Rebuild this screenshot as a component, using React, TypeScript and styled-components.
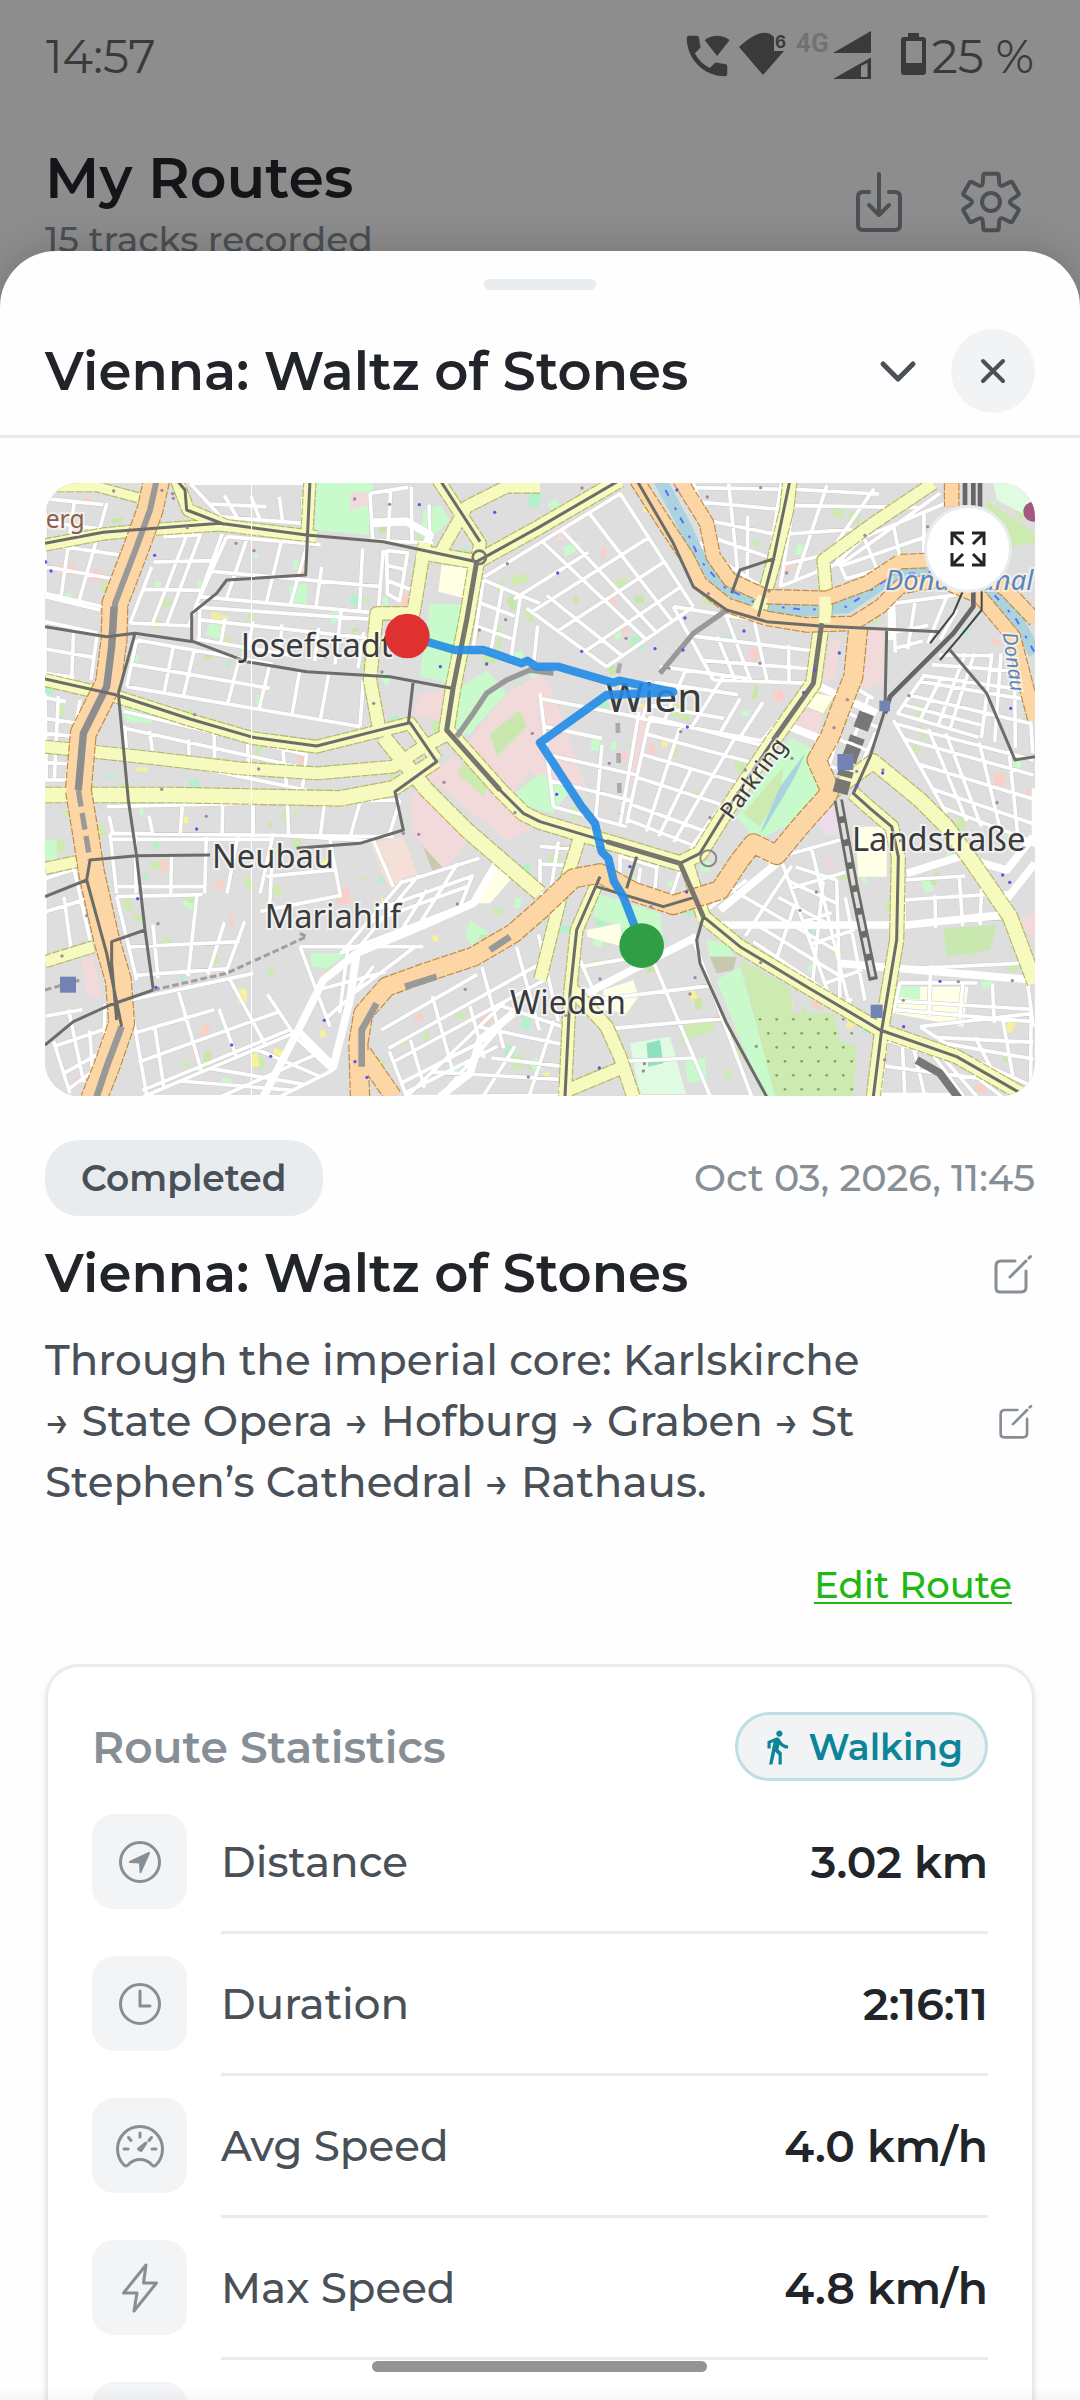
import React from "react";
import styled, { createGlobalStyle } from "styled-components";
import { MdDirectionsWalk, MdWifiCalling } from "react-icons/md";

const GlobalStyle = createGlobalStyle`
  *, *::before, *::after { box-sizing: border-box; }
  body {
    margin: 0;
    background: #8d8d8d;
    font-family: Montserrat, Inter, "Noto Sans", sans-serif;
    color: #212529;
  }
  h1, h2, h3, p, dl, dt, dd { margin: 0; }
  button { font: inherit; color: inherit; border: 0; padding: 0; background: none; cursor: pointer; }
`;

/* ---------- page behind the sheet ---------- */

const Screen = styled.div`
  height: 100vh;
  display: flex;
  flex-direction: column;
  overflow: hidden;
`;

const StatusBar = styled.div`
  flex: none;
  height: 112px;
  padding: 0 46px;
  display: flex;
  align-items: center;
  justify-content: space-between;
  color: #3a3a3a;
  font-size: 46px;
`;

const StatusIcons = styled.div`
  display: flex;
  align-items: center;
  gap: 5px;
`;

const PageHeader = styled.header`
  flex: none;
  height: 139px;
  padding: 30px 55px 0 45px;
  display: flex;
  align-items: flex-start;
  justify-content: space-between;
`;

const PageTitle = styled.h1`
  font-size: 57px;
  line-height: 72px;
  font-weight: 600;
  color: #131519;
`;

const PageSubtitle = styled.p`
  font-size: 36px;
  line-height: 50px;
  font-weight: 500;
  color: #4a5055;
`;

const PageActions = styled.div`
  display: flex;
  gap: 44px;
  padding-top: 26px;
  color: #4a5055;
`;

const ToolButton = styled.button`
  width: 68px;
  height: 68px;
  display: grid;
  place-items: center;
`;

/* ---------- sheet ---------- */

const Sheet = styled.main`
  flex: 1;
  min-height: 0;
  display: flex;
  flex-direction: column;
  position: relative;
  overflow: hidden;
  background: #fefefe;
  border-radius: 56px 56px 0 0;
  box-shadow: 0 -4px 36px rgba(0, 0, 0, 0.16);
`;

const Handle = styled.div`
  flex: none;
  align-self: center;
  width: 112px;
  height: 11px;
  margin-top: 28px;
  border-radius: 6px;
  background: #e9ecef;
`;

const SheetHeader = styled.header`
  flex: none;
  display: flex;
  align-items: center;
  gap: 12px;
  padding: 39px 45px 22px;
  border-bottom: 3px solid #e9ecef;
`;

const Title = styled.h2`
  flex: 1;
  font-size: 53px;
  line-height: 67px;
  font-weight: 600;
`;

const RoundButton = styled.button<{ $filled?: boolean }>`
  width: 84px;
  height: 84px;
  border-radius: 50%;
  display: grid;
  place-items: center;
  color: #495057;
  background: ${(p) => (p.$filled ? "#f1f3f5" : "transparent")};
`;

const Body = styled.div`
  flex: none;
  padding: 45px 45px 0;
`;

const MapFrame = styled.div`
  position: relative;
  aspect-ratio: 990 / 613;
  border-radius: 34px;
  overflow: hidden;
  background: #dedede;

  > svg { display: block; width: 100%; height: 100%; }
`;

const ExpandButton = styled.button`
  position: absolute;
  top: 22px;
  right: 23px;
  width: 88px;
  height: 88px;
  border: 3px solid #e9ecef;
  border-radius: 50%;
  background: #fff;
  color: #212529;
  display: grid;
  place-items: center;
`;

const MetaRow = styled.div`
  display: flex;
  align-items: center;
  justify-content: space-between;
  margin: 44px 0 24px;
`;

const Badge = styled.span`
  padding: 14px 36px;
  border-radius: 34px;
  background: #e9ecef;
  color: #495057;
  font-size: 36px;
  line-height: 48px;
  font-weight: 600;
`;

const DateText = styled.time`
  font-size: 38px;
  line-height: 48px;
  font-weight: 500;
  color: #868e96;
`;

const EditableRow = styled.div`
  display: flex;
  align-items: center;
  justify-content: space-between;
  margin-bottom: 23px;
`;

const EditButton = styled.button`
  display: grid;
  place-items: center;
  color: #868e96;
`;

const Description = styled.p`
  font-size: 42px;
  line-height: 61px;
  font-weight: 500;
  color: #495057;
`;

const LinkRow = styled.div`
  display: flex;
  justify-content: flex-end;
  padding: 25px 23px 55px;
`;

const EditLink = styled.a`
  font-size: 37px;
  line-height: 48px;
  font-weight: 500;
  color: #1fb814;
  text-decoration: underline;
  text-decoration-thickness: 2px;
  text-underline-offset: 4px;
`;

/* ---------- statistics ---------- */

const Card = styled.section`
  padding: 45px 44px 0;
  border: 3px solid #e9ecef;
  border-radius: 34px;
  background: #fff;
  box-shadow: 0 3px 6px rgba(0, 0, 0, 0.08);
`;

const CardHeader = styled.div`
  display: flex;
  align-items: center;
  justify-content: space-between;
  margin-bottom: 33px;
`;

const CardTitle = styled.h3`
  font-size: 44px;
  line-height: 54px;
  font-weight: 600;
  color: #868e96;
`;

const Chip = styled.span`
  display: flex;
  align-items: center;
  gap: 13px;
  height: 69px;
  padding: 0 22px 0 20px;
  border: 3px solid #bddee3;
  border-radius: 35px;
  background: #f1f3f5;
  color: #0c8599;
  font-size: 36px;
  font-weight: 600;
`;

const StatRow = styled.div`
  display: flex;
  gap: 34px;
  height: 142px;
`;

const IconBox = styled.span`
  flex: none;
  width: 95px;
  height: 95px;
  border-radius: 22px;
  background: #f3f4f6;
  color: #868e96;
  display: grid;
  place-items: center;
`;

const StatLine = styled.div`
  flex: 1;
  display: flex;
  align-items: center;
  justify-content: space-between;
  height: 120px;
  padding-bottom: 22px;
  border-bottom: 3px solid #e9ecef;
  line-height: 54px;
`;

const StatLabel = styled.dt`
  font-size: 42px;
  font-weight: 500;
  color: #495057;
`;

const StatValue = styled.dd`
  font-size: 44px;
  font-weight: 600;
`;

const HomeBar = styled.div`
  position: fixed;
  left: 50%;
  bottom: 28px;
  width: 335px;
  height: 11px;
  margin-left: -168px;
  border-radius: 6px;
  background: #949494;
`;

const BottomFade = styled.div`
  position: fixed;
  left: 0;
  right: 0;
  bottom: 0;
  height: 12px;
  background: linear-gradient(rgba(0, 0, 0, 0), rgba(0, 0, 0, 0.03));
`;

/* ---------- icons ---------- */

const line = {
  fill: "none",
  stroke: "currentColor",
  strokeLinecap: "round" as const,
  strokeLinejoin: "round" as const,
};

const ConnectionIcons = () => (
  <svg width="188" height="56" viewBox="0 0 188 56" fill="currentColor" aria-hidden="true">
    <path d="M0 19Q24 -3 35 9V23H45L24 47Z" />
    <text x="36" y="20" fontSize="17" fontWeight="700" fontFamily="Inter, sans-serif">6</text>
    <text x="57" y="24" fontSize="26" fontWeight="700" fill="#727272" fontFamily="Roboto, sans-serif">4G</text>
    <path d="M94 25L132 3V25Z" />
    <path fillRule="evenodd" d="M94 51L132 29.5V51ZM122 38V49H128.500V35Z" />
    <path
      fillRule="evenodd"
      d="M169 5H180V9H184Q187 9 187 12V44Q187 47 184 47H165Q162 47 162 44V12Q162 9 165 9H169ZM167 13V35H183V13Z"
    />
  </svg>
);

const ImportIcon = () => (
  <svg width="68" height="68" viewBox="0 0 68 68" {...line} strokeWidth="4" aria-hidden="true">
    <path d="M24 24H18Q13 24 13 29V57Q13 62 18 62H50Q55 62 55 57V29Q55 24 50 24H44" />
    <path d="M34 6V47M24 37L34 47L44 37" />
  </svg>
);

function gearPath(cx: number, cy: number) {
  const at = (deg: number, r: number) => {
    const a = ((deg - 90) * Math.PI) / 180;
    return `${(cx + r * Math.cos(a)).toFixed(1)} ${(cy + r * Math.sin(a)).toFixed(1)}`;
  };
  let d = "";
  for (let k = 0; k < 6; k++) {
    const t = k * 60;
    d += `${k ? "L" : "M"}${at(t - 16, 28)}Q${at(t - 15, 29)} ${at(t - 13, 29)}L${at(t + 13, 29)}Q${at(t + 15, 29)} ${at(t + 16, 28)}`;
    d += `L${at(t + 23, 21)}Q${at(t + 30, 17)} ${at(t + 37, 21)}`;
  }
  return d + "Z";
}

const GearIcon = () => (
  <svg width="68" height="68" viewBox="0 0 68 68" {...line} strokeWidth="4" aria-hidden="true">
    <path d={gearPath(34, 34)} />
    <circle cx="34" cy="34" r="9" />
  </svg>
);

const ChevronIcon = () => (
  <svg width="48" height="48" viewBox="0 0 48 48" {...line} strokeWidth="5" aria-hidden="true">
    <path d="M10 17L25 32L40 17" />
  </svg>
);

const CloseIcon = () => (
  <svg width="48" height="48" viewBox="0 0 48 48" {...line} strokeWidth="4" aria-hidden="true">
    <path d="M14 14L34 34M34 14L14 34" />
  </svg>
);

const ExpandIcon = () => (
  <svg width="40" height="40" viewBox="0 0 40 40" fill="none" stroke="currentColor" strokeWidth="3" aria-hidden="true">
    <path d="M4 16V4H16M4 4L15 15M24 4H36V16M36 4L25 15M4 24V36H16M4 36L15 25M24 36H36V24M36 36L25 25" />
  </svg>
);

const PencilIcon = ({ size }: { size: number }) => (
  <svg width={size} height={size} viewBox="0 0 42 42" {...line} strokeWidth="3" aria-hidden="true">
    <path d="M22 8H8Q3 8 3 13V35Q3 39 7 39H28Q33 39 33 34V18" />
    <path d="M17 24L33 8M36 5L37.500 3.500" strokeWidth="3" />
  </svg>
);

const DistanceIcon = () => (
  <svg width="48" height="48" viewBox="0 0 48 48" {...line} strokeWidth="3" aria-hidden="true">
    <circle cx="24" cy="24" r="19.500" />
    <path d="M33 15L14 24L24 24.500L24.500 34Z" fill="currentColor" strokeWidth="2" />
  </svg>
);

const ClockIcon = () => (
  <svg width="48" height="48" viewBox="0 0 48 48" {...line} strokeWidth="3" aria-hidden="true">
    <circle cx="24" cy="24" r="19.500" />
    <path d="M24 11V26H34" />
  </svg>
);

const GaugeIcon = () => (
  <svg width="52" height="52" viewBox="-2 -2 52 52" {...line} strokeWidth="3" aria-hidden="true">
    <path d="M8 43C4 39 1.500 34 1.500 27A22.500 22.500 0 0 1 46.500 27C46.500 34 44 39 40 43Q38 45 36 43Q31 37.500 24 37.500Q17 37.500 12 43Q10 45 8 43Z" />
    <path d="M8 27H12M24 11V15M12.500 15.500L15 18.500M33 18.500L35.500 15.500M36 27H40" />
    <path d="M22.500 27L30 21L25 28.500Z" fill="currentColor" />
  </svg>
);

const BoltIcon = () => (
  <svg width="52" height="52" viewBox="-2 -2 52 52" {...line} strokeWidth="3" aria-hidden="true">
    <path d="M30 1L7.500 29H21L18 47L40.500 19H27.500Z" />
  </svg>
);

/* ---------- map ---------- */

type Pt = [number, number];

function seeded(seed: number) {
  let s = seed;
  return () => {
    s = (s * 16807) % 2147483647;
    return s / 2147483647;
  };
}

/* Fills a four-cornered district with n by m blocks of streets. */
function district(a: Pt, b: Pt, c: Pt, d: Pt, n: number, m: number, seed: number) {
  const rnd = seeded(seed * 971 + 13);
  const mix = (p: Pt, q: Pt, t: number): Pt => [p[0] + (q[0] - p[0]) * t, p[1] + (q[1] - p[1]) * t];
  const seg = (p: Pt, q: Pt) => `M${p[0].toFixed(0)} ${p[1].toFixed(0)}L${q[0].toFixed(0)} ${q[1].toFixed(0)}`;
  let out = "";
  for (let i = 0; i <= n; i++) {
    const t = Math.min(1, Math.max(0, (i + (rnd() - 0.5) * 0.5) / n));
    const t2 = Math.min(1, Math.max(0, t + ((rnd() - 0.5) * 0.3) / n));
    const from = rnd() < 0.35 ? 0.35 : 0;
    const p = mix(a, b, t);
    const q = mix(d, c, t2);
    out += seg(mix(p, q, from), q);
  }
  for (let j = 0; j <= m; j++) {
    const t = Math.min(1, Math.max(0, (j + (rnd() - 0.5) * 0.5) / m));
    const to = rnd() < 0.35 ? 0.6 : 1;
    const p = mix(a, d, t);
    const q = mix(b, c, t);
    out += seg(p, mix(p, q, to));
  }
  return out;
}

const streets = [
  district([15, 50], [310, 80], [190, 380], [15, 340], 3, 4, 1),
  district([15, 350], [180, 390], [160, 600], [15, 580], 2, 3, 2),
  district([15, 640], [120, 660], [80, 900], [15, 900], 2, 4, 3),
  district([450, 10], [800, 10], [790, 130], [540, 110], 4, 2, 4),
  district([370, 170], [560, 160], [450, 440], [270, 430], 3, 3, 5),
  district([560, 170], [1030, 210], [1020, 400], [480, 350], 6, 2, 6),
  district([480, 370], [1000, 400], [980, 570], [470, 480], 6, 2, 7),
  district([290, 480], [970, 600], [960, 740], [260, 620], 7, 2, 8),
  district([250, 690], [800, 820], [800, 930], [260, 820], 6, 2, 9),
  district([990, 40], [1180, 10], [1180, 190], [990, 180], 3, 2, 10),
  district([1040, 210], [1150, 220], [1110, 380], [1040, 340], 2, 3, 11),
  district([1330, 290], [1740, 40], [1960, 380], [1700, 560], 5, 5, 12),
  district([1330, 300], [1500, 370], [1480, 560], [1300, 500], 3, 3, 13),
  district([1960, 10], [2230, 10], [2180, 330], [2040, 240], 3, 4, 14),
  district([2270, 10], [2700, 40], [2420, 240], [2220, 320], 4, 4, 15),
  district([2380, 210], [2740, 60], [2740, 210], [2420, 300], 4, 2, 16),
  district([1900, 380], [2330, 450], [2310, 610], [2020, 600], 5, 3, 17),
  district([1860, 560], [2300, 620], [2170, 790], [1800, 720], 5, 3, 18),
  district([1830, 710], [2180, 800], [1960, 1110], [1760, 1030], 4, 5, 19),
  district([1500, 640], [1820, 700], [1760, 1040], [1540, 980], 2, 4, 20),
  district([2560, 370], [2780, 340], [2700, 480], [2560, 520], 3, 2, 21),
  district([2700, 520], [2960, 520], [2980, 820], [2570, 700], 7, 6, 22),
  district([2560, 720], [2980, 830], [2980, 1100], [2720, 1000], 5, 4, 23),
  district([2440, 620], [2540, 680], [2450, 900], [2360, 880], 2, 3, 24),
  district([200, 980], [1080, 960], [1060, 1070], [210, 1060], 8, 1, 25),
  district([210, 1060], [700, 1060], [660, 1240], [230, 1240], 5, 1, 26),
  district([230, 1250], [660, 1240], [560, 1480], [290, 1500], 4, 2, 27),
  district([700, 1060], [1000, 1080], [1060, 1220], [660, 1300], 2, 2, 28),
  district([1090, 1200], [1320, 1130], [1260, 1280], [900, 1420], 4, 3, 29),
  district([15, 1180], [110, 1150], [180, 1380], [15, 1430], 2, 2, 30),
  district([15, 1600], [200, 1570], [190, 1760], [90, 1840], 3, 3, 31),
  district([270, 1560], [640, 1480], [760, 1660], [310, 1850], 5, 3, 32),
  district([310, 1850], [760, 1660], [880, 1770], [720, 1850], 4, 2, 33),
  district([780, 1400], [1150, 1400], [940, 1540], [870, 1640], 3, 2, 34),
  district([1020, 1640], [1500, 1360], [1560, 1620], [1100, 1850], 6, 4, 35),
  district([1100, 1850], [1400, 1560], [1580, 1640], [1570, 1850], 4, 4, 36),
  district([1620, 1440], [1960, 1380], [2140, 1850], [1800, 1850], 2, 4, 37),
  district([2000, 1290], [2200, 1140], [2390, 1200], [2400, 1560], 5, 4, 38),
  district([2220, 1130], [2400, 1080], [2480, 1560], [2380, 1600], 2, 5, 39),
  district([2590, 1200], [2900, 1180], [2900, 1330], [2590, 1350], 4, 2, 40),
  district([2590, 1460], [2960, 1440], [2980, 1640], [2560, 1600], 4, 3, 41),
  district([2540, 1680], [2760, 1750], [2900, 1850], [2520, 1850], 5, 2, 42),
  district([2640, 1640], [2980, 1600], [2980, 1820], [2760, 1720], 3, 3, 43),
  district([1500, 1080], [1620, 1090], [1560, 1240], [1500, 1240], 2, 2, 44),
  district([1740, 1110], [1920, 1170], [1900, 1250], [1740, 1210], 3, 1, 45),
];

const wideStreets = [
  "M670 1850L780 1640L850 1500L950 1420L1140 1340L1300 1270L1370 1150",
  "M950 1420L930 1560L880 1760L770 1650",
  "M1200 1850L1290 1780L1320 1680L1420 1600",
  "M990 130L1100 125L1170 165L1150 215",
  "M1640 1540L1970 1370M2040 1290L2210 1150L2110 1090",
  "M2000 1335H2600L2880 1305",
  "M2340 620L2510 700M2250 740L2350 780",
  "M2600 1180L2760 1130L2900 1170L2980 1070",
  "M2400 1450L2985 1500M2890 1270L2985 1150",
  "M2555 380V480M1930 215L1990 195",
];

const yellow: [string, number][] = [
  ["M15 195L190 162L310 150L540 135L830 170", 36],
  ["M50 20L170 20L320 60", 30],
  ["M410 0L445 90L560 138", 38],
  ["M810 0L800 170", 36],
  ["M1130 215L1310 245L1500 140L1740 0", 44],
  ["M1195 0L1320 190L1310 245", 38],
  ["M1500 20L1400 20L1280 80L1200 220", 38],
  ["M1155 190L1120 400H1010L990 600L1020 760", 40],
  ["M1310 245L1280 420L1240 620L1220 750L1380 930L1450 1000L1500 1025L1700 1085L1920 1150L1980 1120L2060 990L2200 780L2320 610L2345 430", 46],
  ["M15 600L230 650L450 720L640 775L830 800L1050 745L1110 730L1190 840", 38],
  ["M15 800L300 830L600 865L830 880L1060 860L1150 800L1230 760", 38],
  ["M15 945L400 945L900 955L1060 925L1190 840", 46],
  ["M1030 770L1160 930L1280 1050L1500 1240", 46],
  ["M15 1165L110 1145", 36],
  ["M15 1445L160 1400", 36],
  ["M2250 0L2240 90L2200 250L2155 410", 42],
  ["M2680 10L2500 130L2350 240L2360 350L2355 430", 38],
  ["M1940 1150L1990 1310L2100 1400L2300 1520L2520 1650L2750 1730L2960 1850", 42],
  ["M2500 1850L2525 1650L2570 1380L2575 1130L2555 1040L2490 985L2440 940", 42],
  ["M2370 940L2500 845L2640 960L2720 1040L2800 1150L2910 1310L2985 1510", 46],
  ["M1620 1070L1560 1260L1500 1500", 38],
  ["M1680 1190L1610 1350L1590 1540L1575 1850", 38],
  ["M1590 1520L1700 1640L1740 1730L1780 1850M1740 1765L1560 1840", 40],
];

const orange: [string, number][] = [
  ["M350 0L330 90L290 200L225 370L222 480L205 610L130 760L115 930L135 1050L155 1180L200 1380L235 1500L245 1630L200 1760L160 1860", 76],
  ["M960 1850L955 1690L970 1600L1040 1520L1150 1480L1300 1430L1420 1360L1500 1290L1600 1195L1680 1180L1780 1235L1900 1275L2040 1230L2100 1140L2140 1090L2210 1125L2280 1040L2360 950L2370 930L2330 840L2370 770L2400 690L2440 590L2455 440", 56],
  ["M970 1720L1060 1850", 50],
  ["M1790 0L1880 140L1940 230L1980 310L2060 375L2180 415L2300 435L2440 430L2520 380L2580 320L2700 300L2820 350L2920 470L2985 720", 42],
  ["M1920 0L2000 130L2020 230L2070 300L2180 350L2360 355L2480 310L2580 245L2700 240L2800 260L2900 330L2985 420M2735 10V80", 42],
];

const canal = "M1860 0L1930 130L1980 240L2050 320L2160 375L2300 390L2420 380L2560 285L2750 270L2850 330L2930 420L2985 520";

const tram = [
  "M15 190L190 157L540 130L800 165L1030 185L1310 245L1500 140L1740 0",
  "M810 0L797 285L560 300L530 340L455 400V485",
  "M410 0L435 30L440 90L550 132",
  "M1200 0L1320 185",
  "M1310 245L1280 420L1240 620L1220 750L1380 930L1450 1000L1500 1025L1700 1085L1920 1150L1980 1120L2060 990L2200 780L2320 610L2345 430",
  "M15 597L230 645L450 717L640 772L830 798L1050 742L1110 728L1190 845L1065 935L1090 1050L960 1090L770 1105",
  "M15 440L200 470L285 460L460 485L620 545L800 575L1050 590L1235 625M1120 600L1105 730M285 460L235 640",
  "M235 640L265 960L290 1130L315 1350L340 1530M315 1350L215 1385V1450L230 1620",
  "M15 1250L140 1200L150 1140L290 1127L510 1125M140 1200L200 1420L245 1640",
  "M15 1695L100 1625L210 1575L340 1530",
  "M2250 0L2200 240L2155 410M2205 235L2100 270L2075 340",
  "M1790 0L1900 190L1960 320L2060 390L2180 425L2340 438L2700 455",
  "M1920 1150L1990 1310L2100 1400L2300 1520L2520 1650L2750 1730L2960 1850",
  "M1990 1310L1970 1380L1980 1450L2060 1630L2180 1850",
  "M2500 1850L2525 1650L2570 1380L2575 1130L2555 1040L2490 985L2440 940L2490 830L2535 690L2540 450",
  "M1680 1190L1610 1350L1590 1540L1575 1850M1670 1220L1870 1280L1970 1250M1790 1130L1760 1225",
  "M2730 510L2840 640L2925 840L2985 830",
];

const areas: [string, string][] = [
  ["#c8facc", "M830 0H1000L985 165L825 150Z"],
  ["#c8facc", "M1170 370L1280 375L1240 610L1140 590Z"],
  ["#c8facc", "M1250 630L1340 570L1400 640L1290 760L1240 770Z"],
  ["#c8facc", "M1150 90L1200 75L1230 120L1190 160L1145 140Z"],
  ["#f2dada", "M930 40L985 35L990 75L930 90Z"],
  ["#f2dada", "M1140 640L1220 625L1200 720L1115 705Z"],
  ["#f2dada", "M1400 640L1500 580L1540 640L1640 930L1540 960L1470 870L1400 960L1250 830Z"],
  ["#c8e8b0", "M1350 760L1440 690L1460 740L1370 830Z"],
  ["#c8facc", "M1400 960L1500 880L1590 930L1540 1000L1460 980Z"],
  ["#f2dada", "M1240 830L1480 1050L1400 1080L1160 890Z"],
  ["#cdebb0", "M1270 850L1350 910L1330 950L1250 880Z"],
  ["#f2dada", "M1110 940L1150 930L1285 1085L1210 1170L1120 1060Z"],
  ["#c9c9b0", "M1150 1100L1215 1170L1180 1180Z"],
  ["#f5e0d8", "M990 1090L1090 1070L1135 1190L1045 1220Z"],
  ["#ffffe5", "M1205 255L1290 265L1275 355L1195 335Z"],
  ["#ffffe5", "M1370 1160L1420 1190L1350 1270L1310 1270Z"],
  ["#c8facc", "M240 680L330 700L340 730L260 725Z"],
  ["#c8facc", "M745 320L800 310V385L755 380Z"],
  ["#c8facc", "M510 430L560 440L550 480L495 465Z"],
  ["#f2f0a0", "M515 395L565 410L555 440L510 425Z"],
  ["#f9d0c8", "M60 250L105 250V280L60 290Z"],
  ["#c8facc", "M15 1080H50V1140H15Z"],
  ["#f2dada", "M125 1440L160 1430L185 1560L140 1540Z"],
  ["#c8facc", "M810 1420L925 1420L860 1465L815 1460Z"],
  ["#f9d0c8", "M885 1230L925 1220L935 1270L890 1275Z"],
  ["#c8facc", "M1290 1320L1330 1350L1300 1400L1275 1370Z"],
  ["#c8facc", "M2250 775L2310 800L2330 870L2370 950L2300 1010L2150 1080L2090 1010L2200 850Z"],
  ["#cdebb0", "M2110 1000L2230 860L2220 940L2160 1040Z"],
  ["#aad3df", "M2295 820L2270 880L2230 950L2170 1050L2160 1060L2220 920Z"],
  ["#c8facc", "M1670 1240L1860 1300L1870 1390L1660 1310Z"],
  ["#ffffe5", "M1640 1350L1740 1330L1750 1400L1640 1370Z"],
  ["#ffffe5", "M1690 1530L1780 1500L1795 1550L1760 1600L1690 1590Z"],
  ["#c8facc", "M2000 1380L2060 1390L2080 1430L2010 1430Z"],
  ["#c8c8b0", "M2010 1430H2090L2080 1470L2030 1480Z"],
  ["#c8facc", "M2030 1500L2100 1460L2210 1850H2170Z"],
  ["#cdebb0", "M2100 1440L2250 1520L2260 1600H2380L2400 1680L2450 1700L2440 1850H2205Z"],
  ["#dffce2", "M1770 1690L1890 1670L1940 1850H1800Z"],
  ["#8fe0bd", "M1820 1690L1860 1680L1870 1750L1825 1760Z"],
  ["#cdebb0", "M1930 1640L2030 1610L2020 1650L1920 1690Z"],
  ["#c8facc", "M1935 1740L1995 1735L2000 1800L1945 1810Z"],
  ["#ffffe5", "M2445 1040L2540 1040V1190H2455Z"],
  ["#ffffe5", "M2560 1520H2785L2770 1640L2560 1600Z"],
  ["#c8facc", "M2570 1520H2640V1560L2570 1550Z"],
  ["#c8e8b0", "M2710 1345L2870 1335L2850 1410L2720 1430Z"],
  ["#f2dada", "M2470 440H2530L2530 610L2465 630Z"],
  ["#f2dada", "M2370 480H2400L2385 600L2350 610Z"],
  ["#f2dada", "M2280 690L2350 700L2330 770L2260 730Z"],
  ["#ffffe5", "M2325 640L2380 650L2350 700L2300 680Z"],
  ["#eddcec", "M2320 1010L2380 980L2400 1060L2360 1070Z"],
  ["#dffce2", "M2860 10H2985V120L2870 60Z"],
  ["#cdebb0", "M2840 60L2985 160V190L2900 200L2840 160Z"],
  ["#f2dada", "M1535 140L1580 130L1595 175L1550 185Z"],
  ["#c8facc", "M1570 200L1620 185L1625 205L1575 230Z"],
  ["#f2dada", "M1500 590L1540 720L1590 860L1500 880Z"],
  ["#f2dada", "M1800 680L1830 700L1780 920L1750 930Z"],
  ["#f2dada", "M2930 1330L2985 1290V1380L2950 1350Z"],
];

const specks = (() => {
  const rnd = seeded(4242);
  const tones = ["#cdebb0", "#cdebb0", "#c8facc", "#c8e6a8", "#f5f29a", "#cdebb0", "#f9d0c8", "#b5f0cc"];
  return Array.from({ length: 330 }, () => ({
    x: Math.round(rnd() * 2940 + 15),
    y: Math.round(rnd() * 1800 + 15),
    w: Math.round(rnd() * 26 + 12),
    h: Math.round(rnd() * 34 + 10),
    turn: Math.round(rnd() * 60 - 30),
    tone: tones[Math.floor(rnd() * tones.length)],
  }));
})();

const dots = (() => {
  const rnd = seeded(77);
  return Array.from({ length: 110 }, () => ({
    x: Math.round(rnd() * 2940 + 15),
    y: Math.round(rnd() * 1800 + 15),
    tone: rnd() < 0.4 ? "#5a55e8" : "#a08a9c",
  }));
})();

const trees = (() => {
  const out: Pt[] = [];
  for (let j = 0; j < 6; j++)
    for (let i = 0; i < 6; i++) {
      const x = 2160 + i * 50 + (j % 2) * 25;
      const y = 1618 + j * 42;
      if (x > 2130 + j * 18 && x < 2440) out.push([x, y]);
    }
  return out;
})();

const label = {
  fontFamily: '"Noto Sans", sans-serif',
  fill: "#3b3b3b",
  stroke: "#ffffff",
  strokeOpacity: 0.55,
  strokeWidth: 12,
  paintOrder: "stroke" as const,
};

const RouteMap = () => (
  <svg viewBox="15 9 2970 1839" preserveAspectRatio="xMidYMid slice" role="img" aria-label="Route map">
    <rect width="3000" height="1860" fill="#dedede" />
    {specks.map((s, i) => (
      <rect key={i} x={s.x} y={s.y} width={s.w} height={s.h} fill={s.tone} transform={`rotate(${s.turn} ${s.x} ${s.y})`} />
    ))}
    {areas.map(([tone, d], i) => <path key={i} d={d} fill={tone} />)}
    <g fill="#7fa35e">{trees.map(([x, y]) => <circle key={`${x}-${y}`} cx={x} cy={y} r="4" />)}</g>
    <g fill="none" strokeLinejoin="round">
      <path d={streets.join("")} stroke="#cfcccc" strokeWidth="14" />
      <path d={streets.join("")} stroke="#fff" strokeWidth="11" />
      <path d={wideStreets.join("")} stroke="#fff" strokeWidth="23" />
      <path d={canal} stroke="#aad3df" strokeWidth="40" />
      <path d={canal} stroke="#5d6ff0" strokeWidth="6" strokeDasharray="8 26 20 40" />
      {yellow.map(([d, w], i) => <path key={i} d={d} stroke="#b4b862" strokeWidth={w + 4} strokeDasharray="24 4" />)}
      {yellow.map(([d, w], i) => <path key={i} d={d} stroke="#f7fabf" strokeWidth={w - 3} />)}
      {orange.map(([d, w], i) => <path key={i} d={d} stroke="#c48a3c" strokeWidth={w + 5} strokeDasharray="22 5" />)}
      {orange.map(([d, w], i) => <path key={i} d={d} stroke="#fcd6a4" strokeWidth={w - 2} />)}
      <path d="M350 0L330 90L290 200L225 370L218 480" stroke="#999" strokeWidth="18" />
      <path d="M222 380L215 500L200 620L130 760L115 930" stroke="#8d8d8d" strokeWidth="22" />
      <path d="M115 930L135 1050L150 1140" stroke="#999" strokeWidth="16" strokeDasharray="50 20" />
      <path d="M245 1640L200 1760L170 1850M965 1760L965 1650L1010 1570M1095 1520L1190 1490M1350 1410L1410 1370" stroke="#999" strokeWidth="20" />
      <path d="M1250 770L1300 700L1340 640L1400 600L1470 570L1540 580M1860 580L1960 460L2060 390" stroke="#999" strokeWidth="16" />
      <path d="M2150 390L2170 350M2355 430V350" stroke="#f7fabf" strokeWidth="34" />
      <path d={tram.join("")} stroke="#6c6c68" strokeWidth="9" />
      <path d="M1310 245L1280 420L1240 620L1220 750L1380 930M2200 780L2320 610L2345 430M1700 1085L1920 1150L1990 1310" stroke="#77776e" strokeWidth="15" />
      <path d="M2775 0V80M2800 0V80M2820 0V80M2800 330L2800 380L2740 460L2550 650L2535 700" stroke="#666" strokeWidth="14" />
      <path d="M2825 330V390L2760 470L2700 540M2770 330L2740 400L2670 490" stroke="#444" strokeWidth="6" />
      <path d="M2480 700L2430 830L2400 940" stroke="#777" strokeWidth="46" strokeDasharray="50 26 20 10" />
      <path d="M2395 960L2440 1210L2500 1500" stroke="#6a6a66" strokeWidth="28" />
      <path d="M2395 960L2440 1210L2500 1500" stroke="#dedede" strokeWidth="12" strokeDasharray="50 20" />
      <path d="M2630 1740L2700 1780L2760 1860" stroke="#777" strokeWidth="24" />
      <path d="M1740 550L1730 600L1740 1000" stroke="#aaa" strokeWidth="14" strokeDasharray="30 60" />
      <path d="M15 1530L120 1500M340 1530L560 1480L800 1370L780 1360" stroke="#a59a9c" strokeWidth="9" strokeDasharray="20 9" />
      <circle cx="2005" cy="1135" r="24" stroke="#888" strokeWidth="6" />
      <circle cx="1318" cy="232" r="20" stroke="#77776e" strokeWidth="8" />
    </g>
    {dots.map((s, i) => <circle key={i} cx={s.x} cy={s.y} r="5" fill={s.tone} />)}
    <g fill="#7383b5">
      <rect x="2392" y="822" width="48" height="48" />
      <rect x="2518" y="662" width="32" height="32" />
      <rect x="2492" y="1574" width="36" height="40" />
      <rect x="60" y="1490" width="48" height="48" />
    </g>
    <circle cx="2980" cy="95" r="30" fill="#a5587f" />
    <path d="M634.500 0V1860" stroke="#fff" strokeWidth="3" />
    <g {...label} fontSize="98">
      <text x="17" y="144" fontSize="74" fill="#8a5f48">erg</text>
      <text x="603" y="530">Josefstadt</text>
      <text x="516" y="1165">Neubau</text>
      <text x="674" y="1345">Mariahilf</text>
      <text x="1410" y="1603">Wieden</text>
      <text x="2436" y="1113">Landstraße</text>
      <text x="1698" y="695" fontSize="122">Wien</text>
      <text x="2075" y="1022" fontSize="70" transform="rotate(-53 2075 1022)">Parkring</text>
      <g fill="#5a86bd" fontStyle="italic">
        <text x="2535" y="330" fontSize="82">Donaukanal</text>
        <text x="2888" y="460" fontSize="60" transform="rotate(82 2888 460)">Donau</text>
      </g>
    </g>
    <path
      d="M1102 468L1245 510H1330L1445 550L1462 542L1490 560H1555L1720 608L1738 602L1900 636L1700 645L1500 788L1625 980L1665 1030L1685 1115L1705 1135L1722 1205L1750 1250L1800 1380"
      fill="none"
      stroke="#228be6"
      strokeOpacity="0.9"
      strokeWidth="25"
      strokeLinecap="round"
      strokeLinejoin="round"
    />
    <circle cx="1102" cy="468" r="67" fill="#e03131" />
    <circle cx="1805" cy="1397" r="67" fill="#2f9e44" />
  </svg>
);

/* ---------- screen ---------- */

const stats = [
  { name: "Distance", value: "3.02 km", Icon: DistanceIcon },
  { name: "Duration", value: "2:16:11", Icon: ClockIcon },
  { name: "Avg Speed", value: "4.0 km/h", Icon: GaugeIcon },
  { name: "Max Speed", value: "4.8 km/h", Icon: BoltIcon },
];

export default function App() {
  return (
    <>
      <GlobalStyle />
      <Screen>
        <StatusBar>
          <span>14:57</span>
          <StatusIcons>
            <MdWifiCalling size={54} aria-hidden="true" />
            <ConnectionIcons />
            <span>25 %</span>
          </StatusIcons>
        </StatusBar>
        <PageHeader>
          <div>
            <PageTitle>My Routes</PageTitle>
            <PageSubtitle>15 tracks recorded</PageSubtitle>
          </div>
          <PageActions>
            <ToolButton aria-label="Import"><ImportIcon /></ToolButton>
            <ToolButton aria-label="Settings"><GearIcon /></ToolButton>
          </PageActions>
        </PageHeader>

        <Sheet>
          <Handle />
          <SheetHeader>
            <Title>Vienna: Waltz of Stones</Title>
            <RoundButton aria-label="Collapse"><ChevronIcon /></RoundButton>
            <RoundButton $filled aria-label="Close"><CloseIcon /></RoundButton>
          </SheetHeader>
          <Body>
            <MapFrame>
              <RouteMap />
              <ExpandButton aria-label="Full screen"><ExpandIcon /></ExpandButton>
            </MapFrame>

            <MetaRow>
              <Badge>Completed</Badge>
              <DateText dateTime="2026-10-03T11:45">Oct 03, 2026, 11:45</DateText>
            </MetaRow>

            <EditableRow>
              <Title>Vienna: Waltz of Stones</Title>
              <EditButton aria-label="Edit title"><PencilIcon size={42} /></EditButton>
            </EditableRow>
            <EditableRow>
              <Description>
                Through the imperial core: Karlskirche
                <br />
                → State Opera → Hofburg → Graben → St
                <br />
                Stephen’s Cathedral → Rathaus.
              </Description>
              <EditButton aria-label="Edit description"><PencilIcon size={37} /></EditButton>
            </EditableRow>

            <LinkRow>
              <EditLink href="#edit-route">Edit Route</EditLink>
            </LinkRow>

            <Card>
              <CardHeader>
                <CardTitle>Route Statistics</CardTitle>
                <Chip><MdDirectionsWalk size={38} aria-hidden="true" />Walking</Chip>
              </CardHeader>
              <dl>
                {stats.map(({ name, value, Icon }) => (
                  <StatRow key={name}>
                    <IconBox><Icon /></IconBox>
                    <StatLine>
                      <StatLabel>{name}</StatLabel>
                      <StatValue>{value}</StatValue>
                    </StatLine>
                  </StatRow>
                ))}
              </dl>
              <IconBox as="div" />
            </Card>
          </Body>
        </Sheet>
      </Screen>
      <BottomFade />
      <HomeBar />
    </>
  );
}
